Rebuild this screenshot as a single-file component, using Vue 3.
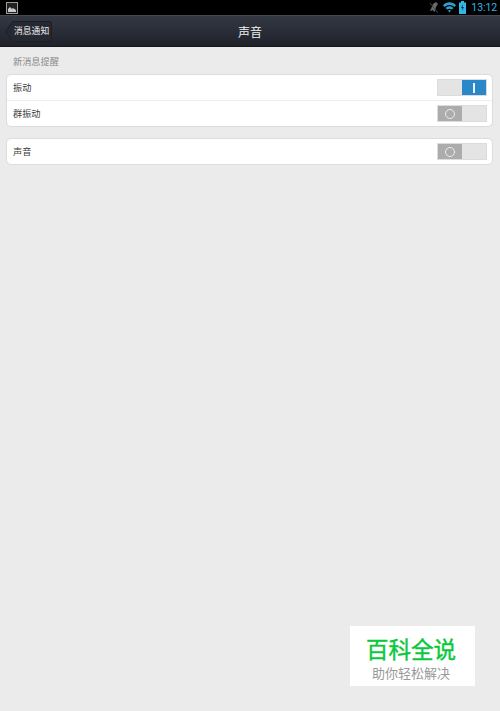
<template>
  <div class="page">
    <div class="status-bar">
      <svg class="pic-icon" width="12" height="12" viewBox="0 0 12 12">
        <rect x="0.5" y="0.5" width="11" height="11" fill="#222" stroke="#9a9a9a" />
        <path d="M2 10V7l2-2 2 2 1-1 3 2v2z" fill="#c8c8c8" />
      </svg>
      <div class="status-right">
        <svg width="11" height="13" viewBox="0 0 11 13">
          <path d="M7 1 4 3 2 8l-1 1 1 1 2-1 1 2 1-1 1-4 2-3z" fill="#6a6a6a" />
          <path d="M1 2l8 10" stroke="#444" stroke-width="1" />
        </svg>
        <svg width="13" height="11" viewBox="0 0 13 11">
          <path d="M0 3.2C3.6-.6 9.400-.6 13 3.200L11.400 5C8.700 2.200 4.300 2.200 1.600 5z" fill="#2aa3cf" />
          <path d="M2.600 6C4.900 3.700 8.100 3.700 10.400 6L8.900 7.600C7.500 6.300 5.500 6.300 4.100 7.600z" fill="#2aa3cf" />
          <path d="M5 8.600C5.800 7.900 7.200 7.900 8 8.600L6.500 10.500z" fill="#2aa3cf" />
        </svg>
        <svg width="7" height="13" viewBox="0 0 7 13">
          <path d="M2 0h3v1.500h2V13H0V1.500h2z" fill="#33b5e5" />
          <path d="M4 3 2 7h1.400L3 10l2-4H3.600z" fill="#0b3c4e" />
        </svg>
        <span class="clock">13:12</span>
      </div>
    </div>
    <header class="nav-bar">
      <div class="back-btn">消息通知</div>
      <h1 class="nav-title">声音</h1>
    </header>
    <main class="content">
      <div class="section-label">新消息提醒</div>
      <div class="card">
        <div class="row">
          <span>振动</span>
          <div class="switch on">
            <span class="half"></span>
            <span class="half knob"><i class="bar"></i></span>
          </div>
        </div>
        <div class="row">
          <span>群振动</span>
          <div class="switch">
            <span class="half knob"><i class="ring"></i></span>
            <span class="half"></span>
          </div>
        </div>
      </div>
      <div class="card second">
        <div class="row">
          <span>声音</span>
          <div class="switch">
            <span class="half knob"><i class="ring"></i></span>
            <span class="half"></span>
          </div>
        </div>
      </div>
      <div class="watermark">
        <div class="wm-title">百科全说</div>
        <div class="wm-sub">助你轻松解决</div>
      </div>
    </main>
  </div>
</template>

<script setup>
</script>

<style>
html,
body {
  margin: 0;
  background: #ebebeb;
}
</style>

<style scoped>
.page {
  width: 500px;
  height: 711px;
  display: flex;
  flex-direction: column;
  overflow: hidden;
  background: #ebebeb;
  font-family: "Liberation Sans", "Noto Sans CJK SC", sans-serif;
}

.status-bar {
  height: 15px;
  flex-shrink: 0;
  background: #000;
  display: flex;
  align-items: center;
  justify-content: space-between;
  padding: 0 3px 0 6px;
}

.pic-icon {
  display: block;
}

.status-right {
  display: flex;
  align-items: center;
  gap: 3px;
}

.clock {
  margin-left: 2px;
  color: #33b5e5;
  font-family: Roboto, "Liberation Sans", sans-serif;
  font-size: 10.500px;
  letter-spacing: -0.1px;
}

.nav-bar {
  height: 32px;
  flex-shrink: 0;
  position: relative;
  display: flex;
  align-items: center;
  padding-left: 12px;
  box-sizing: border-box;
  background: linear-gradient(#343843, #1f222a);
  border-top: 1px solid #444852;
  border-bottom: 1px solid #14161a;
}

.back-btn {
  position: relative;
  height: 21px;
  width: 40px;
  box-sizing: border-box;
  padding-left: 2px;
  line-height: 19px;
  color: #eee;
  font-size: 8.800px;
  white-space: nowrap;
  background: #262932;
  border: 1px solid #1c1e24;
  border-left: none;
  border-radius: 0 3px 3px 0;
  z-index: 0;
}

/* arrow tip of the back button */
.back-btn::before {
  content: "";
  position: absolute;
  left: -7px;
  top: 2px;
  width: 14px;
  height: 14px;
  background: #262932;
  border-left: 1px solid #1c1e24;
  border-bottom: 1px solid #1c1e24;
  transform: scaleX(0.66) rotate(45deg);
  z-index: -1;
}

.nav-title {
  position: absolute;
  left: 0;
  right: 0;
  margin: 0;
  text-align: center;
  color: #f0f0f0;
  font-size: 12px;
  font-weight: normal;
}

.content {
  flex: 1;
  position: relative;
  padding: 0 7px 0 6px;
}

.section-label {
  height: 27px;
  padding: 2px 0 0 7px;
  box-sizing: border-box;
  line-height: 26px;
  color: #8a8a8a;
  font-size: 9.200px;
}

.card {
  background: #fff;
  border: 1px solid #dcdcdc;
  border-radius: 5px;
}

.second {
  margin-top: 11px;
}

.row {
  height: 25px;
  display: flex;
  align-items: center;
  justify-content: space-between;
  padding: 0 5px 0 6px;
  color: #3c3c3c;
  font-size: 9.200px;
}

.row > span {
  margin-bottom: 2px;
}

.row + .row {
  border-top: 1px solid #ececec;
}

.switch {
  width: 50px;
  height: 17px;
  display: flex;
  background: #e4e4e4;
  border: 1px solid #dcdcdc;
  box-sizing: border-box;
}

.half {
  flex: 1;
  display: flex;
  align-items: center;
  justify-content: center;
}

.knob {
  background: #acacac;
}

.on .knob {
  background: #2a88c8;
}

.ring {
  width: 8px;
  height: 8px;
  border: 1.500px solid #eee;
  border-radius: 50%;
}

.bar {
  width: 2px;
  height: 10px;
  background: #e8f2fa;
}

.watermark {
  position: absolute;
  left: 350px;
  top: 579px;
  width: 125px;
  height: 60px;
  background: #fff;
  text-align: center;
}

.wm-title {
  margin-top: 11px;
  margin-left: -3px;
  color: #0ac83c;
  font-size: 22.500px;
  line-height: 27px;
  -webkit-text-stroke: 0.4px #0ac83c;
}

.wm-sub {
  margin-top: 1px;
  margin-left: -3px;
  color: #999;
  font-size: 13px;
  line-height: 17px;
}
</style>
